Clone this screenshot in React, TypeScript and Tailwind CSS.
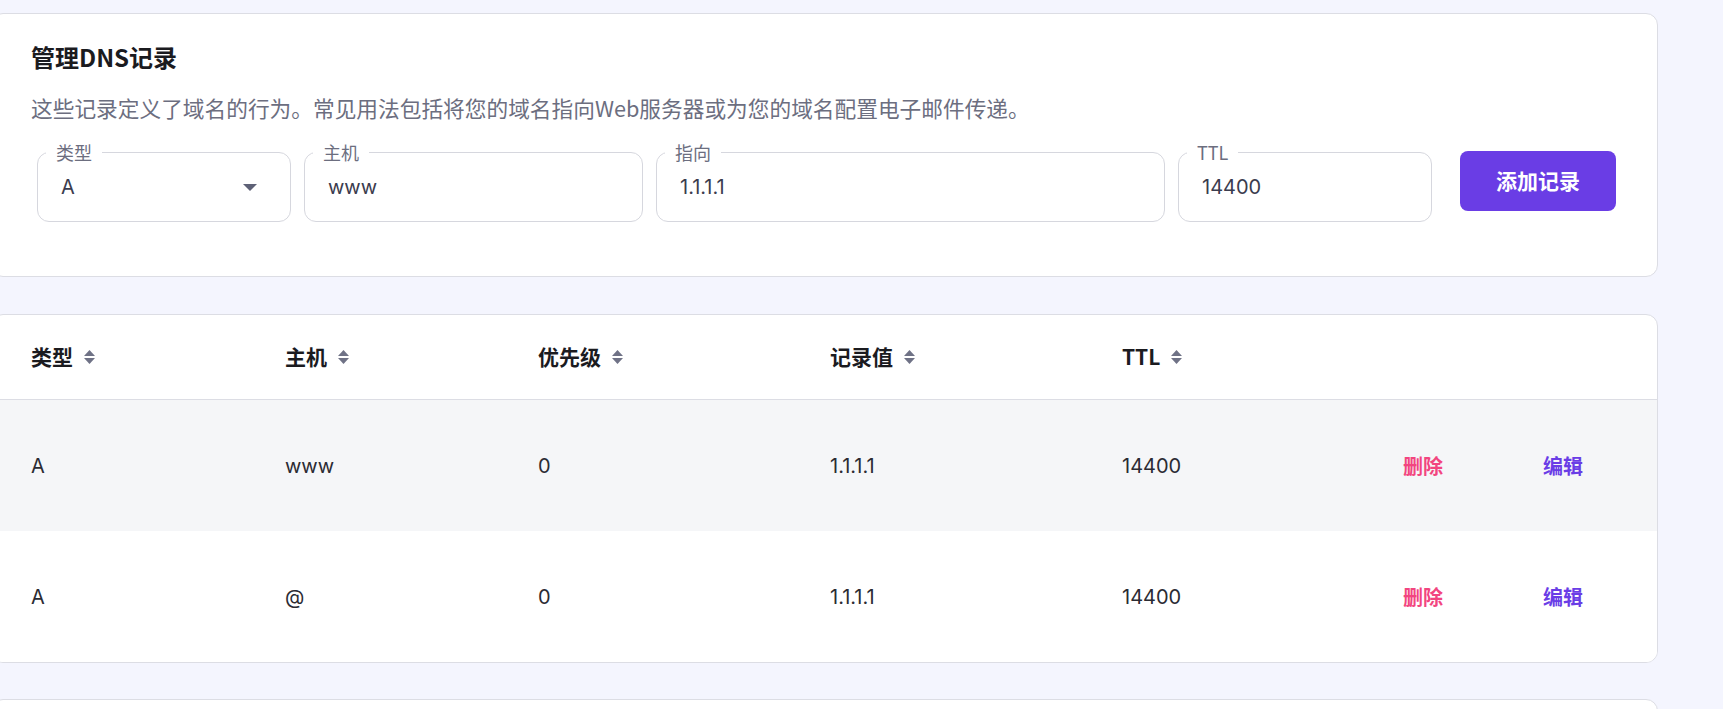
import React from "react";

const records = [
  { type: "A", host: "www", priority: "0", value: "1.1.1.1", ttl: "14400" },
  { type: "A", host: "@", priority: "0", value: "1.1.1.1", ttl: "14400" },
];

function SortIcon() {
  return (
    <svg width="11" height="14" viewBox="0 0 11 14" className="text-[#6f7286]">
      <path d="M5.5 0L11 6H0Z" fill="currentColor" />
      <path d="M5.5 14L0 8H11Z" fill="currentColor" />
    </svg>
  );
}

function Field({
  label,
  value,
  width,
  caret,
}: {
  label: string;
  value: string;
  width: string;
  caret?: boolean;
}) {
  return (
    <fieldset
      className={`${width} rounded-[12px] border border-[#d6d7de] pl-[8px] pr-[8px] pb-[9px]`}
    >
      <legend className="px-[10px] font-['Noto_Sans_CJK_SC',sans-serif] text-[18px] leading-[20px] text-[#6c6e7f]">
        {label}
      </legend>
      <div className="flex h-[50px] items-center justify-between pl-[15px] pr-[25px] font-['Inter','Noto_Sans_CJK_SC',sans-serif] text-[20px] text-[#3b3c4e]">
        <span>{value}</span>
        {caret && (
          <svg width="14" height="7" viewBox="0 0 14 7" className="text-[#5e6176]">
            <path d="M0 0H14L7 7Z" fill="currentColor" />
          </svg>
        )}
      </div>
    </fieldset>
  );
}

const cols = [
  "w-[254px]",
  "w-[253px]",
  "w-[292px]",
  "w-[292px]",
  "w-[281px]",
  "w-[140px]",
];

export default function App() {
  const heads = ["类型", "主机", "优先级", "记录值", "TTL"];
  return (
    <div className="min-h-screen overflow-hidden bg-[#f4f5fe] pt-[13px]">
      <div className="-ml-[9px] flex w-[1667px] flex-col">
        {/* add record */}
        <div className="rounded-[12px] border border-[#dcdde4] bg-white pb-[54px] pl-[39px] pt-[27px]">
          <h2 className="font-['Noto_Sans_CJK_SC',sans-serif] text-[24px] font-bold leading-[32px] text-[#1b1b1f]">
            管理DNS记录
          </h2>
          <p className="mt-[20px] font-['Noto_Sans_CJK_SC',sans-serif] text-[21.7px] leading-[30px] text-[#6c6e7f]">
            这些记录定义了域名的行为。常见用法包括将您的域名指向Web服务器或为您的域名配置电子邮件传递。
          </p>
          <div className="ml-[6px] mt-[19px] flex items-start gap-[13px]">
            <Field label="类型" value="A" width="w-[254px]" caret />
            <Field label="主机" value="www" width="w-[339px]" />
            <Field label="指向" value="1.1.1.1" width="w-[509px]" />
            <Field label="TTL" value="14400" width="w-[254px]" />
            <button
              type="button"
              className="ml-[15px] mt-[9px] h-[60px] w-[156px] rounded-[8px] bg-[#6a3de5] font-['Noto_Sans_CJK_SC',sans-serif] text-[21px] font-bold text-white"
            >
              添加记录
            </button>
          </div>
        </div>

        {/* records table */}
        <div className="mt-[37px] overflow-hidden rounded-[12px] border border-[#dcdde4] bg-white">
          <div className="flex h-[85px] items-center border-b border-[#dcdde4] pl-[39px]">
            {heads.map((h, i) => (
              <div key={h} className={`${cols[i]} flex items-center gap-[11px]`}>
                <span className="font-['Noto_Sans_CJK_SC',sans-serif] text-[21px] font-bold text-[#1b1b1f]">
                  {h}
                </span>
                <SortIcon />
              </div>
            ))}
          </div>
          {records.map((r, i) => (
            <div
              key={i}
              className={`flex h-[131px] items-center pl-[39px] font-['Inter','Noto_Sans_CJK_SC',sans-serif] text-[20px] text-[#2b2b33] ${
                i === 0 ? "bg-[#f5f6f8]" : "bg-white"
              }`}
            >
              <div className={cols[0]}>{r.type}</div>
              <div className={cols[1]}>{r.host}</div>
              <div className={cols[2]}>{r.priority}</div>
              <div className={cols[3]}>{r.value}</div>
              <div className={cols[4]}>{r.ttl}</div>
              <div className={`${cols[5]} font-['Noto_Sans_CJK_SC',sans-serif] font-semibold text-[#f2457f]`}>
                删除
              </div>
              <div className="font-['Noto_Sans_CJK_SC',sans-serif] font-semibold text-[#6a3de6]">
                编辑
              </div>
            </div>
          ))}
        </div>

        {/* next card, cut off */}
        <div className="mt-[36px] h-[200px] rounded-[12px] border border-[#dcdde4] bg-white" />
      </div>
    </div>
  );
}
